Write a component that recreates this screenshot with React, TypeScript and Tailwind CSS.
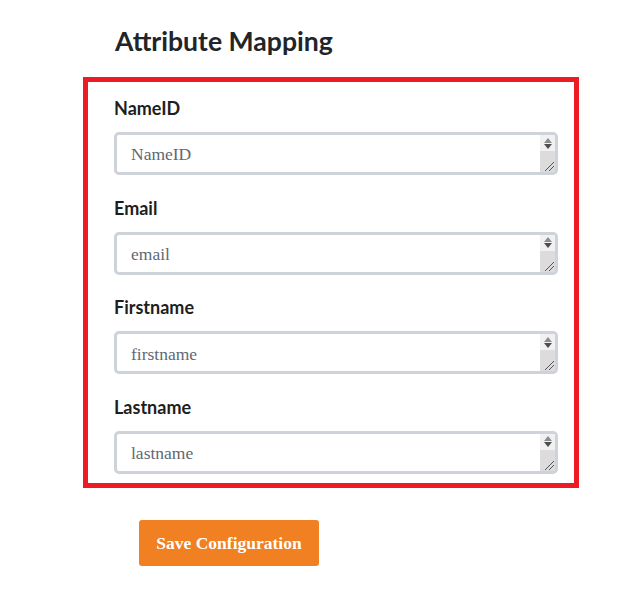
import React from "react";

function FakeTextarea({ placeholder }: { placeholder: string }) {
  return (
    <div className="relative flex h-[43px] w-[444px] items-center rounded-[5px] border-[3px] border-[#ced3d9] bg-white">
      <span
        className="pl-[14px] pt-[3px] text-[17.5px] leading-none text-[#5f6873]"
        style={{ fontFamily: '"Liberation Serif", "Times New Roman", serif' }}
      >
        {placeholder}
      </span>
      <div className="absolute right-0 top-0 flex h-full w-[15px] flex-col">
        <div className="flex h-[16px] flex-col items-center justify-center gap-[1px] bg-[#f1f1f1]">
          <svg width="8" height="5" viewBox="0 0 8 5">
            <path d="M0 5 L4 0 L8 5 Z" fill="#8c8c8c" />
          </svg>
          <svg width="8" height="5" viewBox="0 0 8 5">
            <path d="M0 0 L8 0 L4 5 Z" fill="#4e4e4e" />
          </svg>
        </div>
        <div className="relative flex-1 bg-[#dcdcdc]">
          <svg className="absolute bottom-[1px] right-[1px]" width="11" height="11" viewBox="0 0 11 11">
            <line x1="2" y1="11" x2="11" y2="2" stroke="#555" strokeWidth="1" />
            <line x1="6" y1="11" x2="11" y2="6" stroke="#555" strokeWidth="1" />
          </svg>
        </div>
      </div>
    </div>
  );
}

const fields = [
  { label: "NameID", placeholder: "NameID" },
  { label: "Email", placeholder: "email" },
  { label: "Firstname", placeholder: "firstname" },
  { label: "Lastname", placeholder: "lastname" },
];

export default function App() {
  return (
    <div className="min-h-[589px] w-full bg-white pl-[83px] pt-[26px]">
      <h2
        className="pl-[32px] text-[26.6px] font-bold leading-[31px] text-[#212529]"
        style={{ fontFamily: 'Lato, "Liberation Sans", sans-serif' }}
      >
        Attribute Mapping
      </h2>
      <div className="mt-[20px] w-[496px] border-[5px] border-[#ed1c24] pb-[9px] pl-[26px] pr-[16px] pt-[14px]">
        <div className="flex flex-col gap-[20.67px]">
          {fields.map((f) => (
            <div key={f.label} className="flex flex-col">
              <label
                className="text-[18px] font-bold leading-[24px] text-[#1e1e1e]"
                style={{ fontFamily: 'Lato, "Liberation Sans", sans-serif' }}
              >
                {f.label}
              </label>
              <div className="mt-[12px]">
                <FakeTextarea placeholder={f.placeholder} />
              </div>
            </div>
          ))}
        </div>
      </div>
      <div className="pl-[56px] pt-[32px]">
        <button
          className="flex h-[46px] w-[180px] items-center justify-center rounded-[3px] bg-[#f18022] text-[17.5px] font-bold text-white"
          style={{ fontFamily: '"Liberation Serif", "Times New Roman", serif' }}
        >
          Save Configuration
        </button>
      </div>
    </div>
  );
}
